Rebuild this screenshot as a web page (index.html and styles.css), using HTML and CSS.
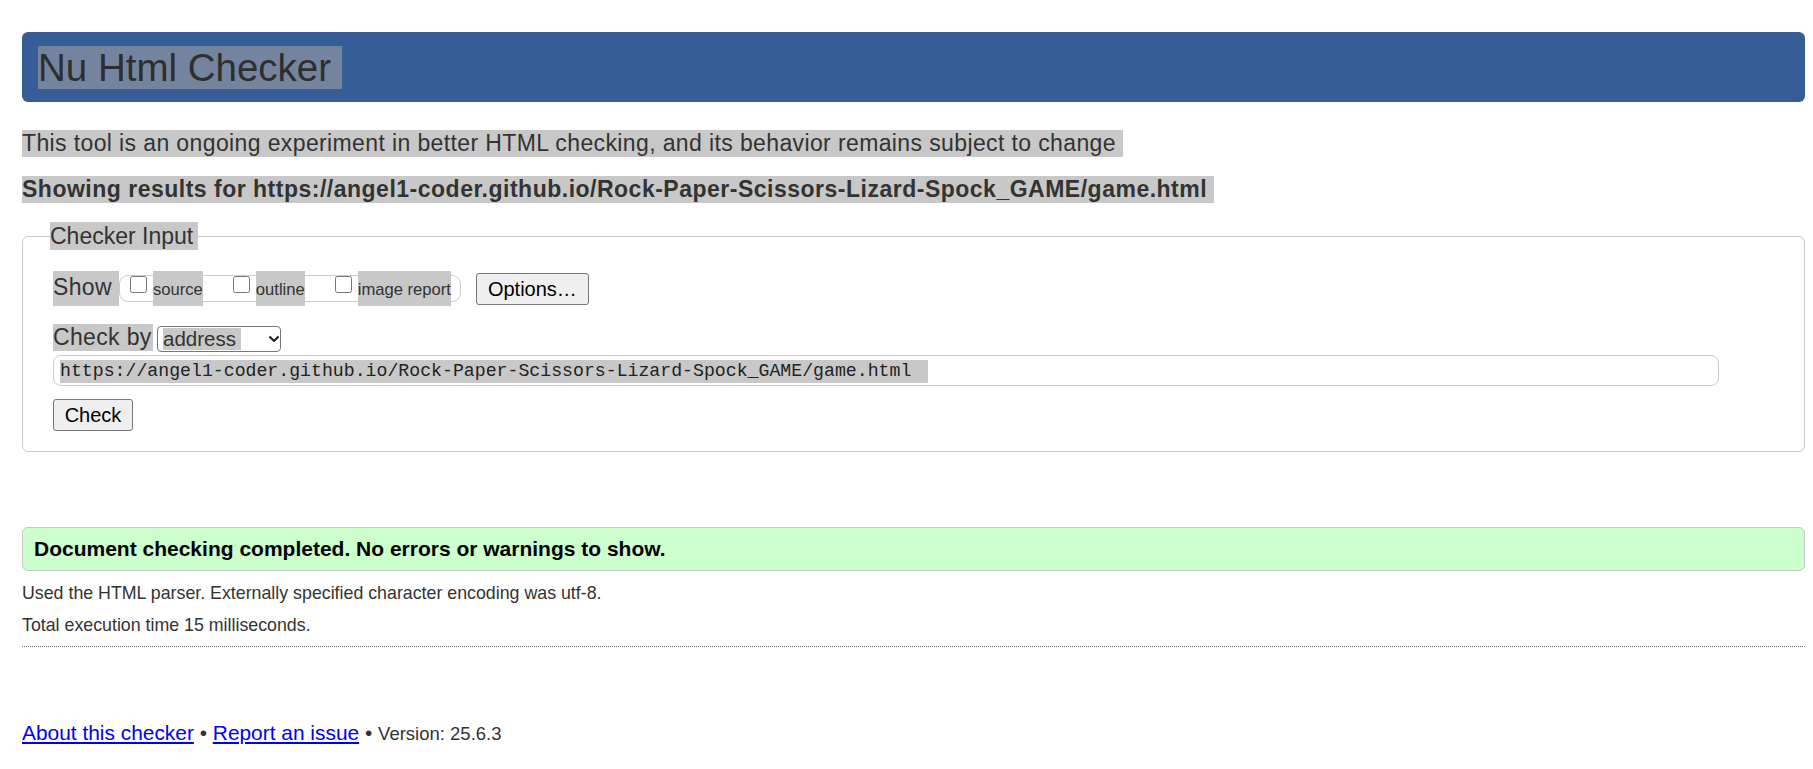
FILE: index.html
```html
<!DOCTYPE html>
<html lang="en">
<head>
<meta charset="utf-8">
<title>Nu Html Checker</title>
<link rel="stylesheet" href="styles.css">
</head>
<body>
<header class="masthead">
  <h1 class="title"><span class="hl-dark">Nu Html Checker</span></h1>
</header>

<p class="intro"><span class="hl">This tool is an ongoing experiment in better HTML checking, and its behavior remains subject to change</span></p>
<p class="results"><span class="hl">Showing results for https://angel1-coder.github.io/Rock-Paper-Scissors-Lizard-Spock_GAME/game.html</span></p>

<fieldset class="checker">
  <legend class="checker-legend"><span class="hl legend-hl">Checker Input</span></legend>

  <div class="show-row">
    <span class="hl show-label">Show</span>
    <div class="pill">
      <input type="checkbox" class="cb">
      <span class="hl cb-label">source</span>
      <input type="checkbox" class="cb cb-gap">
      <span class="hl cb-label">outline</span>
      <input type="checkbox" class="cb cb-gap">
      <span class="hl cb-label">image report</span>
    </div>
    <button class="btn btn-options" type="button">Options…</button>
  </div>

  <div class="by-row">
    <span class="hl by-label">Check by</span>
    <div class="select">
      <span class="hl select-hl">address</span>
      <svg class="chev" width="12" height="8" viewBox="0 0 12 8"><path d="M1.5 1.5 L6 6 L10.5 1.5" fill="none" stroke="#111" stroke-width="1.8"/></svg>
    </div>
  </div>

  <div class="url-input"><span class="hl url-hl">https://angel1-coder.github.io/Rock-Paper-Scissors-Lizard-Spock_GAME/game.html</span></div>

  <button class="btn btn-check" type="button">Check</button>
</fieldset>

<div class="success">Document checking completed. No errors or warnings to show.</div>
<p class="meta first">Used the HTML parser. Externally specified character encoding was utf-8.</p>
<p class="meta">Total execution time 15 milliseconds.</p>
<hr class="rule">

<footer class="footer">
  <a href="#">About this checker</a> • <a href="#">Report an issue</a> • <span class="version">Version: 25.6.3</span>
</footer>
</body>
</html>
```

FILE: styles.css
```css
html, body {
  margin: 0;
  background: #ffffff;
}
body {
  padding: 32px 8px 0 22px;
  font-family: "Liberation Sans", Arial, sans-serif;
  color: #333333;
}
.hl {
  display: inline-block;
  background: #c8c8c8;
}
.masthead {
  height: 70px;
  box-sizing: border-box;
  padding: 14px 16px 0;
  background: #365d95;
  border-radius: 6px;
}
.title {
  margin: 0;
  font-size: 38.5px;
  font-weight: normal;
  line-height: 43px;
}
.hl-dark {
  display: inline-block;
  background: #75849e;
  color: #2e2e2e;
  padding-right: 11px;
}
.intro, .results {
  margin: 0;
  font-size: 23px;
  line-height: 27px;
}
.intro { margin-top: 28px; letter-spacing: 0.38px; }
.intro .hl { padding-right: 7px; }
.results {
  margin-top: 19px;
  font-weight: bold;
  letter-spacing: 0.5px;
}
.results .hl { padding-right: 7px; }

.checker {
  margin: 19px 0 0;
  padding: 21px 30px 20px 30px;
  border: 1px solid #cccccc;
  border-radius: 6px;
  min-width: 0;
}
.checker-legend {
  padding: 0;
  margin-left: -3px;
  font-size: 23px;
  line-height: 28px;
}
.legend-hl { padding: 0 5px 0 0; }

.show-row {
  display: flex;
  align-items: flex-start;
  height: 35px;
}
.show-label {
  font-size: 23px;
  letter-spacing: 0.35px;
  line-height: 27px;
  height: 35px;
  box-sizing: border-box;
  padding-top: 3px;
  width: 66px;
}
.pill {
  display: flex;
  align-items: flex-start;
  margin-top: 4px;
  height: 27px;
  box-sizing: border-box;
  border: 1px solid #cccccc;
  border-radius: 9px;
  padding: 0 9px 0 10px;
}
.cb {
  width: 17px;
  height: 17px;
  margin: 0 6px 0 0;
}
.cb-gap { margin-left: 30px; }
.cb-label {
  margin-top: -5px;
  height: 35px;
  box-sizing: border-box;
  padding-top: 9px;
  font-size: 16.6px;
  line-height: 20px;
}
.btn {
  font-family: "Liberation Sans", Arial, sans-serif;
  font-size: 20px;
  color: #000000;
  background: #efefef;
  border: 1px solid #767676;
  border-radius: 3px;
  height: 32px;
  padding: 0;
  box-sizing: border-box;
  line-height: 30px;
}
.btn-options {
  margin: 2px 0 0 15px;
  width: 113px;
}
.by-row {
  display: flex;
  align-items: flex-start;
  margin-top: 18px;
  height: 28px;
}
.by-label {
  font-size: 23px;
  letter-spacing: 0.35px;
  line-height: 27px;
  width: 100px;
}
.select {
  display: flex;
  align-items: center;
  margin: 2px 0 0 4px;
  width: 124px;
  height: 26px;
  box-sizing: border-box;
  border: 1px solid #767676;
  border-radius: 4px;
  padding-left: 5px;
  background: #ffffff;
}
.select-hl {
  font-size: 20.5px;
  line-height: 22px;
  width: 78px;
  color: #333333;
}
.chev { margin-left: 27px; }
.url-input {
  margin-top: 3px;
  height: 31px;
  box-sizing: border-box;
  border: 1px solid #cccccc;
  border-radius: 8px;
  width: 1666px;
  padding: 4px 0 0 6px;
}
.url-hl {
  font-family: "Liberation Mono", "DejaVu Sans Mono", monospace;
  font-size: 18.2px;
  line-height: 23px;
  padding-right: 17px;
  color: #222222;
}
.btn-check {
  display: block;
  margin-top: 13px;
  width: 80px;
}

.success {
  margin-top: 75px;
  height: 44px;
  box-sizing: border-box;
  background: #ccffcc;
  border: 1px solid #c8c8c8;
  border-radius: 6px;
  padding: 9px 0 0 11px;
  font-size: 21px;
  line-height: 24px;
  font-weight: bold;
  color: #000000;
}
.meta {
  margin: 12px 0 0;
  font-size: 17.8px;
  line-height: 20px;
}
.meta.first { margin-top: 12px; }
.rule {
  margin: 11px 0 0;
  border: 0;
  border-top: 1px dotted #777777;
  height: 0;
}
.footer {
  margin-top: 74px;
  font-size: 20.9px;
  line-height: 24px;
  color: #333333;
}
.footer a { color: #0000ee; }
.version { font-size: 18.5px; }
```
